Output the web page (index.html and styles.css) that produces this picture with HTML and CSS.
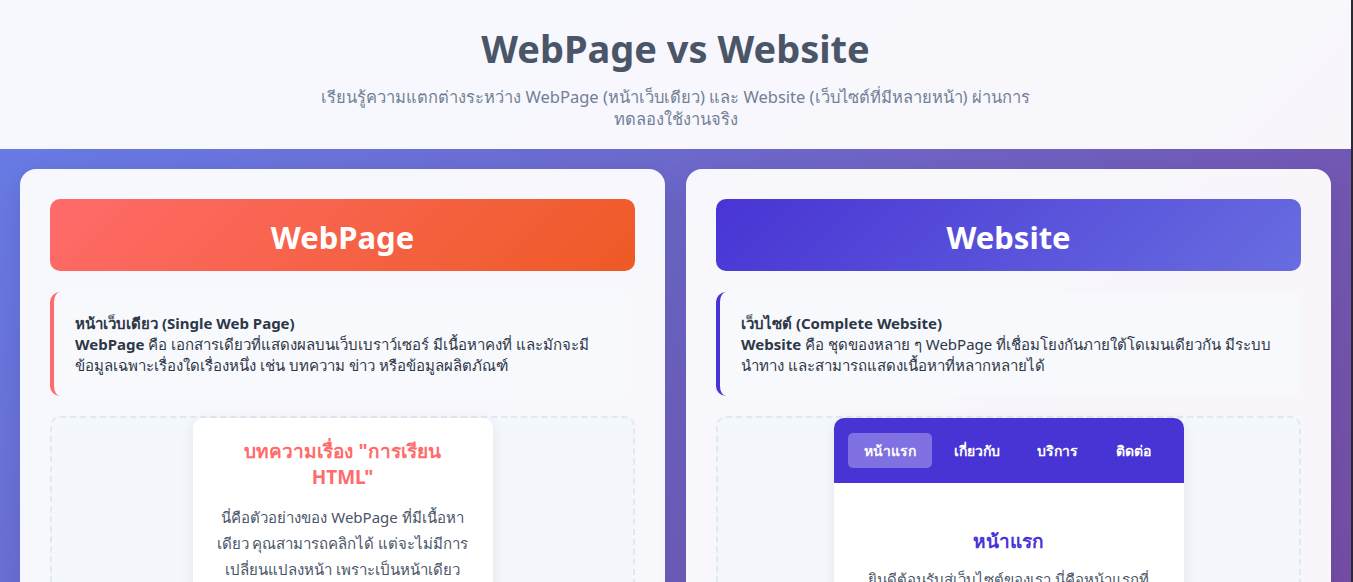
FILE: index.html
```html
<!DOCTYPE html>
<html lang="th">
<head>
<meta charset="utf-8">
<title>WebPage vs Website</title>
<link rel="stylesheet" href="styles.css">
</head>
<body>
<div class="page">
  <header class="header">
    <h1 class="title">WebPage vs Website</h1>
    <p class="subtitle">เรียนรู้ความแตกต่างระหว่าง WebPage (หน้าเว็บเดียว) และ Website (เว็บไซต์ที่มีหลายหน้า) ผ่านการทดลองใช้งานจริง</p>
  </header>
  <main class="compare">
    <section class="card">
      <div class="card-head head-page">WebPage</div>
      <div class="info info-page">
        <strong class="info-title">หน้าเว็บเดียว (Single Web Page)</strong>
        <p class="info-text"><strong>WebPage</strong> คือ เอกสารเดียวที่แสดงผลบนเว็บเบราว์เซอร์ มีเนื้อหาคงที่ และมักจะมีข้อมูลเฉพาะเรื่องใดเรื่องหนึ่ง เช่น บทความ ข่าว หรือข้อมูลผลิตภัณฑ์</p>
      </div>
      <div class="demo">
        <div class="article">
          <h3 class="article-title">บทความเรื่อง "การเรียน HTML"</h3>
          <p class="article-text">นี่คือตัวอย่างของ WebPage ที่มีเนื้อหาเดียว คุณสามารถคลิกได้ แต่จะไม่มีการเปลี่ยนแปลงหน้า เพราะเป็นหน้าเดียว</p>
        </div>
      </div>
    </section>
    <section class="card">
      <div class="card-head head-site">Website</div>
      <div class="info info-site">
        <strong class="info-title">เว็บไซต์ (Complete Website)</strong>
        <p class="info-text"><strong>Website</strong> คือ ชุดของหลาย ๆ WebPage ที่เชื่อมโยงกันภายใต้โดเมนเดียวกัน มีระบบนำทาง และสามารถแสดงเนื้อหาที่หลากหลายได้</p>
      </div>
      <div class="demo">
        <div class="site">
          <nav class="site-nav">
            <span class="nav-item active">หน้าแรก</span>
            <span class="nav-item">เกี่ยวกับ</span>
            <span class="nav-item">บริการ</span>
            <span class="nav-item">ติดต่อ</span>
          </nav>
          <div class="site-body">
            <h3 class="site-title">หน้าแรก</h3>
            <p class="site-text">ยินดีต้อนรับสู่เว็บไซต์ของเรา นี่คือหน้าแรกที่แสดงข้อมูลภาพรวมของเว็บไซต์</p>
          </div>
        </div>
      </div>
    </section>
  </main>
</div>
</body>
</html>
```
FILE: styles.css
```css
html {
  background: #2b2a30;
}
body {
  margin: 0;
  width: 1351px;
  min-height: 582px;
  font-family: "Noto Sans", "Open Sans", sans-serif;
  background: linear-gradient(135deg, #667eea 0%, #764ba2 100%);
  color: #2d3748;
}
.page {
  min-height: 582px;
}
.header {
  background: rgba(255, 255, 255, 0.95);
  text-align: center;
  padding: 22px 20px 20px;
  height: 107px;
}
.title {
  margin: 0 0 12px;
  font-size: 38px;
  line-height: 52px;
  font-weight: 700;
  color: #4a5568;
}
.subtitle {
  margin: 0 auto;
  max-width: 740px;
  font-size: 16.5px;
  line-height: 22px;
  color: #718096;
}
.compare {
  display: grid;
  grid-template-columns: 1fr 1fr;
  gap: 21px;
  padding: 20px;
}
.card {
  background: rgba(255, 255, 255, 0.95);
  border-radius: 16px;
  padding: 30px;
  box-shadow: 0 10px 30px rgba(0, 0, 0, 0.1);
}
.card-head {
  height: 72px;
  border-radius: 10px;
  display: flex;
  align-items: center;
  justify-content: center;
  color: #fff;
  font-size: 31px;
  font-weight: 700;
  padding-top: 3px;
  box-sizing: border-box;
}
.head-page {
  background: linear-gradient(135deg, #ff6b6b, #ee5a24);
}
.head-site {
  background: linear-gradient(135deg, #4834d4, #686de0);
}
.info {
  margin-top: 21px;
  background: #f8f9fc;
  border-radius: 10px;
  padding: 21px 20px 20px 21px;
  font-size: 15px;
  line-height: 21px;
}
.info-page {
  border-left: 4px solid #ff6b6b;
}
.info-site {
  border-left: 4px solid #4834d4;
}
.info-title {
  display: block;
  color: #2d3748;
}
.info-text {
  margin: 0;
  color: #2d3748;
}
.demo {
  margin-top: 20px;
  border: 2px dashed #e2e8f0;
  border-radius: 10px;
  background: #f4f7fb;
  display: flex;
  justify-content: center;
  height: 200px;
}
.article {
  width: 260px;
  background: #fff;
  border-radius: 10px;
  padding: 20px;
  text-align: center;
  box-shadow: 0 4px 15px rgba(0, 0, 0, 0.08);
  align-self: flex-start;
}
.article-title {
  margin: 0 5px 14px;
  color: #ff6b6b;
  font-size: 19px;
  line-height: 26px;
  font-weight: 700;
}
.article-text {
  margin: 0;
  color: #4a5568;
  font-size: 15px;
  line-height: 26px;
}
.site {
  width: 350px;
  background: #fff;
  border-radius: 10px;
  overflow: hidden;
  box-shadow: 0 4px 15px rgba(0, 0, 0, 0.08);
  align-self: flex-start;
}
.site-nav {
  background: #4834d4;
  display: flex;
  justify-content: space-around;
  align-items: center;
  padding: 15px 14px 15px 12px;
}
.nav-item {
  color: #fff;
  font-size: 14px;
  font-weight: 700;
  padding: 8px 16px;
  border-radius: 5px;
  line-height: 19px;
}
.nav-item.active {
  background: rgba(255, 255, 255, 0.3);
}
.site-body {
  padding: 45px 20px 20px;
  text-align: center;
}
.site-title {
  margin: 0 0 12px;
  color: #4834d4;
  font-size: 19px;
  line-height: 26px;
}
.site-text {
  margin: 0;
  color: #4a5568;
  font-size: 15px;
  line-height: 26px;
}
```
